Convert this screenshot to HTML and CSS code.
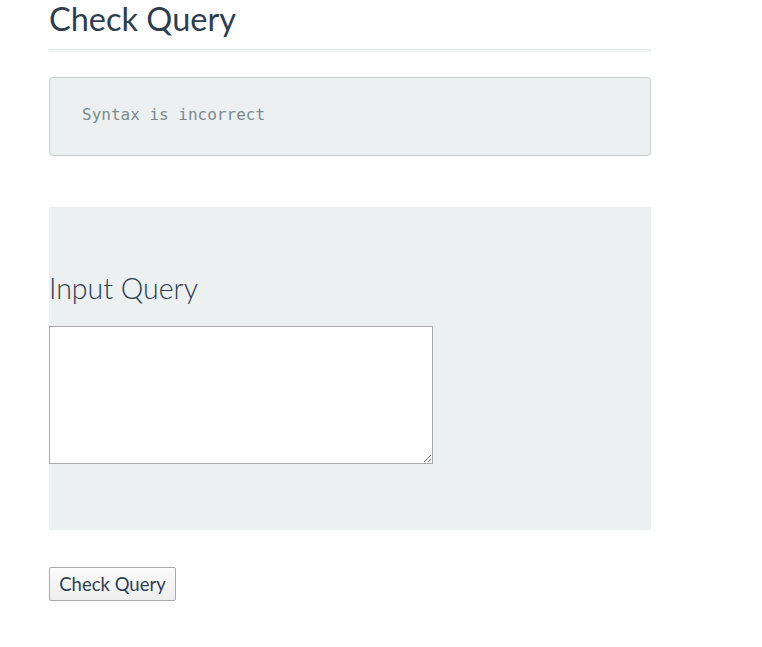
FILE: index.html
```html
<!DOCTYPE html>
<html>
<head>
<meta charset="utf-8">
<link rel="stylesheet" href="styles.css">
</head>
<body>
<div class="container">
  <h1 class="title">Check Query</h1>
  <pre class="result">Syntax is incorrect</pre>
  <div class="panel">
    <h2 class="label">Input Query</h2>
    <textarea class="query"></textarea>
  </div>
  <button class="btn">Check Query</button>
</div>
</body>
</html>
```
FILE: styles.css
```css
html, body {
  margin: 0;
  padding: 0;
  background: #fff;
}
body {
  font-family: Lato, "Open Sans", sans-serif;
  color: #2c3e50;
}
.container {
  width: 602px;
  margin-left: 49px;
  display: flex;
  flex-direction: column;
  align-items: flex-start;
}
.title {
  font-family: Lato, sans-serif;
  font-weight: 400;
  font-size: 32.5px;
  line-height: 36px;
  margin: 1px 0 0 0;
  padding-bottom: 12px;
  width: 100%;
  border-bottom: 1px solid #e6eaeb;
  box-shadow: 0 2px 0 #f1f3f4;
  color: #2c3e50;
}
.result {
  box-sizing: border-box;
  width: 100%;
  height: 79px;
  margin: 27px 0 0 0;
  padding: 27px 32px;
  background: #ecf0f1;
  border: 1px solid #cccccc;
  border-radius: 4px;
  font-family: "DejaVu Sans Mono", "Liberation Mono", monospace;
  font-size: 16px;
  line-height: 20px;
  color: #7b8a8b;
}
.panel {
  box-sizing: border-box;
  width: 100%;
  height: 323px;
  margin-top: 51px;
  background: #ecf0f1;
  padding-top: 64px;
}
.label {
  font-family: Lato, sans-serif;
  font-weight: 300;
  font-size: 28.5px;
  line-height: 34px;
  margin: 0 0 21px 0;
  color: #2c3e50;
}
.query {
  display: block;
  box-sizing: border-box;
  width: 384px;
  height: 138px;
  margin: 0;
  border: 1px solid #a9a9a9;
  background: #fff;
}
.btn {
  margin-top: 37px;
  box-sizing: border-box;
  height: 34px;
  width: 127px;
  padding: 0;
  font-family: Lato, sans-serif;
  font-size: 18.5px;
  color: #2c3e50;
  background: linear-gradient(#fbfbfb, #eeeeee);
  border: 1px solid #a9a9a9;
  border-radius: 2px;
}
```
